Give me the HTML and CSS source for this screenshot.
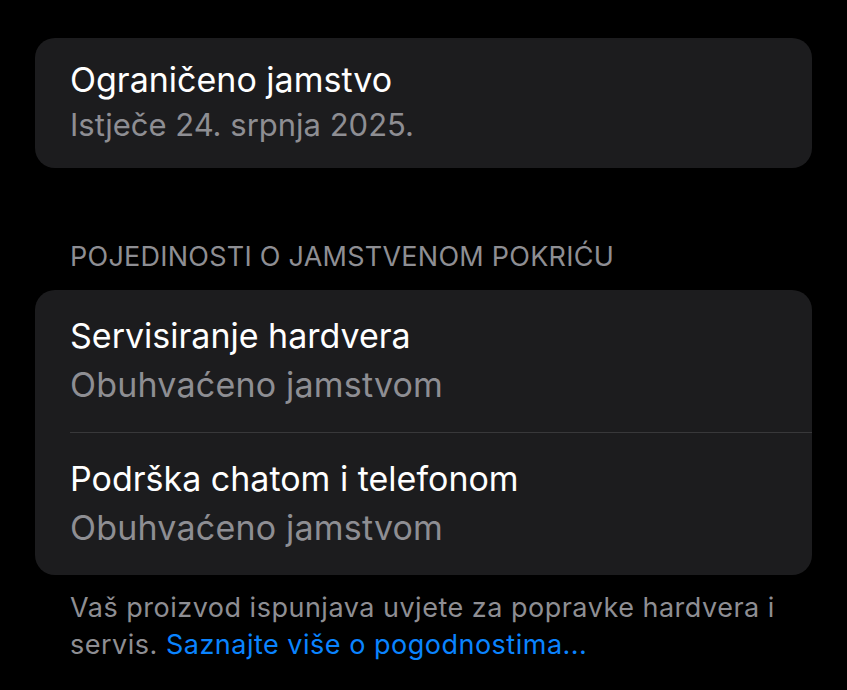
FILE: index.html
```html
<!DOCTYPE html>
<html lang="hr">
<head>
    <meta charset="UTF-8">
    <meta name="viewport" content="width=device-width, initial-scale=1.0">
    <title>Jamstvo</title>
    <link rel="stylesheet" href="styles.css">
</head>
<body>
<div class="page">
    <div class="card card-summary">
        <div class="row">
            <div class="row-title">Ograničeno jamstvo</div>
            <div class="row-sub">Istječe 24. srpnja 2025.</div>
        </div>
    </div>

    <div class="section-header">POJEDINOSTI O JAMSTVENOM POKRIĆU</div>

    <div class="card card-details">
        <div class="row">
            <div class="row-title">Servisiranje hardvera</div>
            <div class="row-sub">Obuhvaćeno jamstvom</div>
        </div>
        <div class="row">
            <div class="row-title">Podrška chatom i telefonom</div>
            <div class="row-sub">Obuhvaćeno jamstvom</div>
        </div>
    </div>

    <p class="footer-note">
        Vaš proizvod ispunjava uvjete za popravke hardvera i servis.
        <a href="#">Saznajte više o pogodnostima...</a>
    </p>
</div>
</body>
</html>
```

FILE: styles.css
```css
* {
    margin: 0;
    padding: 0;
    box-sizing: border-box;
}

body {
    background: #000;
    font-family: Inter, 'Noto Sans', sans-serif;
    color: #fff;
}

.page {
    padding: 38px 35px 0;
}

/* 卡片 */
.card {
    background: #1c1c1e;
    border-radius: 20px;
    overflow: hidden;
}

.row {
    padding-left: 35px;
}

.row-title {
    font-size: 34px;
    color: #fff;
}

.row-sub {
    color: #8e8e93;
}

/* 顶部卡片 */
.card-summary .row {
    padding-top: 20px;
    padding-bottom: 20px;
}

.card-summary .row-title {
    line-height: 44px;
}

.card-summary .row-sub {
    font-size: 31px;
    line-height: 46px;
}

/* 分组标题 */
.section-header {
    margin: 74px 0 18px;
    padding-left: 35px;
    font-size: 27px;
    line-height: 30px;
    letter-spacing: 0.25px;
    color: #8e8e93;
}

/* 详情卡片 */
.card-details .row {
    padding-top: 23px;
    padding-bottom: 21px;
}

.card-details .row + .row {
    border-top: 1px solid #38383a;
    margin-left: 35px;
    padding-left: 0;
}

.card-details .row-title {
    line-height: 46px;
}

.card-details .row-sub {
    font-size: 34px;
    letter-spacing: 0.2px;
    line-height: 52px;
}

/* 底部说明 */
.footer-note {
    margin-top: 14px;
    padding: 0 35px;
    font-size: 27px;
    line-height: 37px;
    letter-spacing: 0.5px;
    color: #8e8e93;
}

.footer-note a {
    color: #0a84ff;
    text-decoration: none;
}
```
